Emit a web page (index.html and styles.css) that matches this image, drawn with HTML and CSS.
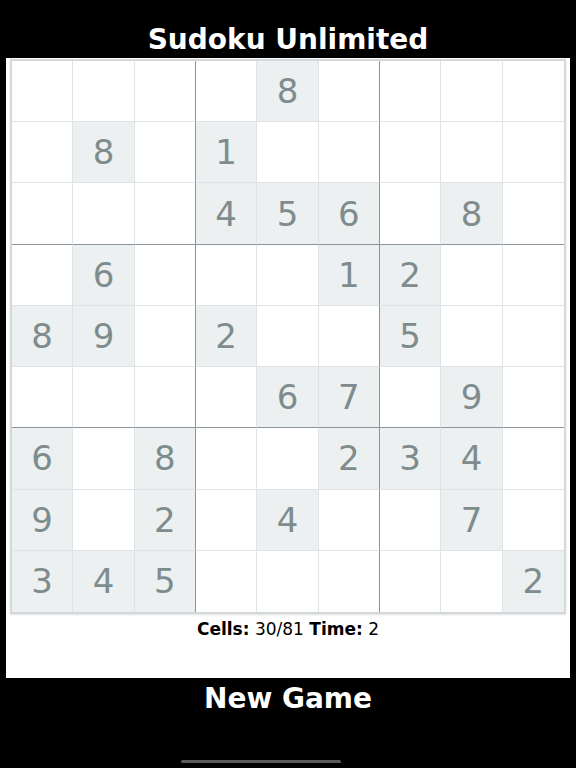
FILE: index.html
```html
<!DOCTYPE html>
<html>
<head>
<meta charset="utf-8">
<link rel="stylesheet" href="styles.css">
</head>
<body>
<div class="app">
  <h1 class="title">Sudoku Unlimited</h1>
  <div class="panel">
    <div class="board">
      <div class="cell"></div><div class="cell"></div><div class="cell bc"></div><div class="cell"></div><div class="cell given">8</div><div class="cell bc"></div><div class="cell"></div><div class="cell"></div><div class="cell"></div>
      <div class="cell"></div><div class="cell given">8</div><div class="cell bc"></div><div class="cell given">1</div><div class="cell"></div><div class="cell bc"></div><div class="cell"></div><div class="cell"></div><div class="cell"></div>
      <div class="cell br"></div><div class="cell br"></div><div class="cell br bc"></div><div class="cell br given">4</div><div class="cell br given">5</div><div class="cell br bc given">6</div><div class="cell br"></div><div class="cell br given">8</div><div class="cell br"></div>
      <div class="cell"></div><div class="cell given">6</div><div class="cell bc"></div><div class="cell"></div><div class="cell"></div><div class="cell bc given">1</div><div class="cell given">2</div><div class="cell"></div><div class="cell"></div>
      <div class="cell given">8</div><div class="cell given">9</div><div class="cell bc"></div><div class="cell given">2</div><div class="cell"></div><div class="cell bc"></div><div class="cell given">5</div><div class="cell"></div><div class="cell"></div>
      <div class="cell br"></div><div class="cell br"></div><div class="cell br bc"></div><div class="cell br"></div><div class="cell br given">6</div><div class="cell br bc given">7</div><div class="cell br"></div><div class="cell br given">9</div><div class="cell br"></div>
      <div class="cell given">6</div><div class="cell"></div><div class="cell bc given">8</div><div class="cell"></div><div class="cell"></div><div class="cell bc given">2</div><div class="cell given">3</div><div class="cell given">4</div><div class="cell"></div>
      <div class="cell given">9</div><div class="cell"></div><div class="cell bc given">2</div><div class="cell"></div><div class="cell given">4</div><div class="cell bc"></div><div class="cell"></div><div class="cell given">7</div><div class="cell"></div>
      <div class="cell last given">3</div><div class="cell last given">4</div><div class="cell last bc given">5</div><div class="cell last"></div><div class="cell last"></div><div class="cell last bc"></div><div class="cell last"></div><div class="cell last"></div><div class="cell last given">2</div>
    </div>
    <p class="status"><b>Cells:</b> 30/81 <b>Time:</b> 2</p>
  </div>
  <div class="newgame">New Game</div>
  <div class="home-bar"></div>
</div>
</body>
</html>
```
FILE: styles.css
```css
html, body {
  margin: 0;
  padding: 0;
  background: #000;
}
.app {
  width: 576px;
  height: 768px;
  background: #000;
  display: flex;
  flex-direction: column;
  font-family: "DejaVu Sans", Verdana, sans-serif;
}
.title {
  margin: 0;
  height: 58px;
  box-sizing: border-box;
  padding-top: 23px;
  line-height: 34px;
  font-size: 28px;
  font-weight: bold;
  color: #fff;
  text-align: center;
}
.panel {
  margin: 0 6px;
  height: 620px;
  box-sizing: border-box;
  padding: 1px 4px 0;
  background: #fff;
}
.board {
  width: 556px;
  height: 555px;
  box-sizing: border-box;
  border: 2px solid #d3d8da;
  display: grid;
  grid-template-columns: repeat(9, 1fr);
  grid-template-rows: repeat(9, 1fr);
  box-shadow: 0 1px 2px rgba(0,0,0,0.12);
}
.cell {
  border-right: 1px solid #dfe3e6;
  border-bottom: 1px solid #dfe3e6;
  display: flex;
  align-items: center;
  justify-content: center;
  font-size: 34px;
  font-weight: normal;
  color: #7f8c8d;
  background: #fff;
}
.cell:nth-child(9n) {
  border-right: none;
}
.cell.bc {
  border-right-color: #8a959b;
}
.cell.br {
  border-bottom-color: #8a959b;
}
.cell.last {
  border-bottom: none;
}
.cell.given {
  background: #ecf0f1;
}
.status {
  margin: 5px 0 0;
  line-height: 20px;
  font-size: 17px;
  color: #000;
  text-align: center;
}
.newgame {
  height: 42px;
  line-height: 42px;
  font-size: 28px;
  font-weight: bold;
  color: #fff;
  text-align: center;
}
.home-bar {
  width: 160px;
  height: 3px;
  border-radius: 2px;
  background: #5a5a5a;
  margin: 40px 0 0 181px;
}
```
